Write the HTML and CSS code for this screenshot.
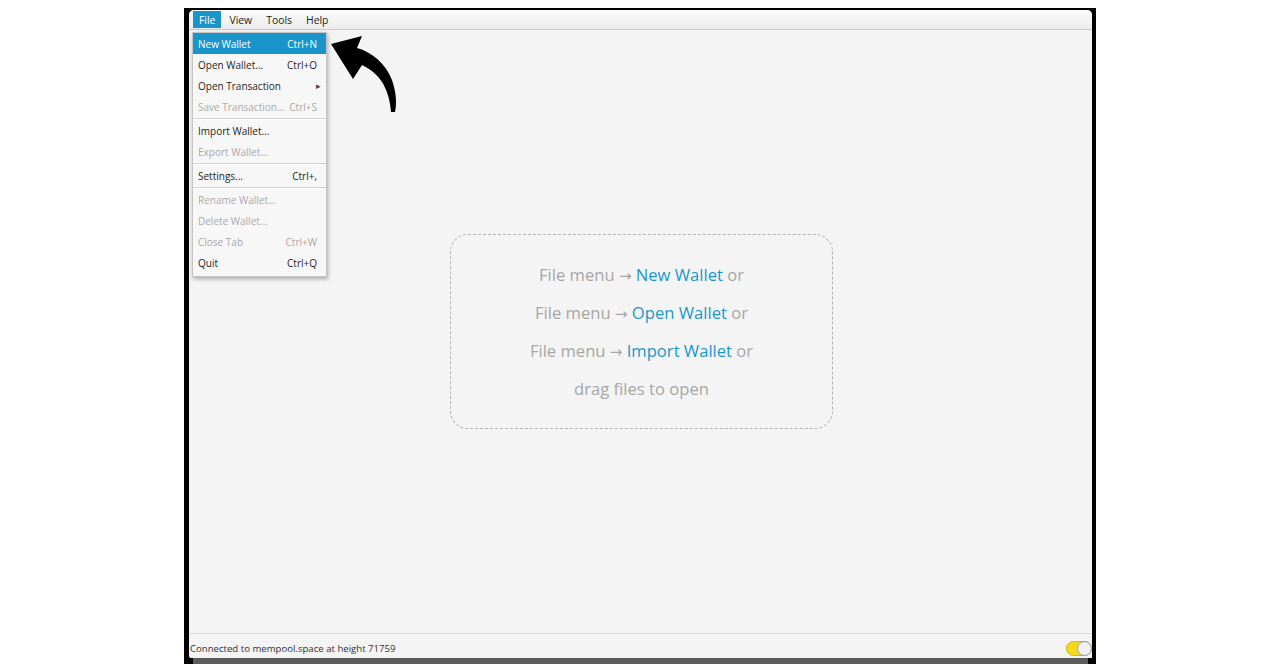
FILE: index.html
```html
<!DOCTYPE html>
<html>
<head>
<meta charset="utf-8">
<link rel="stylesheet" href="styles.css">
</head>
<body>
<div class="frame">
  <div class="window">
    <div class="menubar">
      <span class="mb-item active">File</span>
      <span class="mb-item">View</span>
      <span class="mb-item">Tools</span>
      <span class="mb-item">Help</span>
    </div>
    <div class="main">
      <div class="dropbox">
        <div class="line">File menu <span class="arr">→</span> <span class="link">New Wallet</span> or</div>
        <div class="line">File menu <span class="arr">→</span> <span class="link">Open Wallet</span> or</div>
        <div class="line">File menu <span class="arr">→</span> <span class="link">Import Wallet</span> or</div>
        <div class="line">drag files to open</div>
      </div>
    </div>
    <div class="statusbar">
      <span class="status-text">Connected to mempool.space at height 71759</span>
      <span class="toggle"><span class="knob"></span></span>
    </div>

    <div class="menu">
      <div class="row sel"><span>New Wallet</span><span>Ctrl+N</span></div>
      <div class="row"><span>Open Wallet...</span><span>Ctrl+O</span></div>
      <div class="row"><span>Open Transaction</span><span class="sub">&#9656;</span></div>
      <div class="row dis"><span>Save Transaction...</span><span>Ctrl+S</span></div>
      <div class="sep"></div>
      <div class="row"><span>Import Wallet...</span><span></span></div>
      <div class="row dis"><span>Export Wallet...</span><span></span></div>
      <div class="sep"></div>
      <div class="row"><span>Settings...</span><span>Ctrl+,</span></div>
      <div class="sep"></div>
      <div class="row dis"><span>Rename Wallet...</span><span></span></div>
      <div class="row dis"><span>Delete Wallet...</span><span></span></div>
      <div class="row dis"><span>Close Tab</span><span>Ctrl+W</span></div>
      <div class="row"><span>Quit</span><span>Ctrl+Q</span></div>
    </div>

    <svg class="arrow" width="90" height="90" viewBox="0 0 90 90">
      <path d="M11,14 L42,6 L37,18 C52,22 66,34 72,50 C76,62 77,72 75,82 L71,82 C70,70 67,60 62,52 C57,44 50,39 42,35 L33,49 Z" fill="#000"/>
    </svg>
  </div>
  <div class="shadow"></div>
</div>
</body>
</html>
```

FILE: styles.css
```css
html, body {
  margin: 0;
  padding: 0;
  background: #ffffff;
}
body {
  width: 1280px;
  height: 668px;
  overflow: hidden;
  font-family: "Open Sans", "Noto Sans", sans-serif;
}
.frame {
  margin: 8px 0 0 184px;
  width: 912px;
  height: 656px;
  box-sizing: border-box;
  background: #000;
  padding: 2px 4px 0 5px;
  display: flex;
  flex-direction: column;
}
.window {
  position: relative;
  flex: 1;
  background: #f4f4f4;
  border-radius: 5px 5px 0 2px;
  display: flex;
  flex-direction: column;
  overflow: visible;
}
.shadow {
  height: 6px;
  margin: 0 4px 0 4px;
  background: #5c5c5c;
}
.menubar {
  height: 20px;
  box-sizing: border-box;
  border-bottom: 1px solid #c9c9c9;
  background: linear-gradient(#fbfbfb, #ececec);
  border-radius: 5px 5px 0 0;
  display: flex;
  align-items: stretch;
  padding: 1px 0 1px 4px;
  font-size: 10.4px;
  color: #1e1e1e;
}
.mb-item {
  display: flex;
  align-items: center;
  padding: 0 7px;
}
.mb-item.active {
  background: #1995cb;
  color: #fff;
  padding: 0 6px;
  margin-right: 1px;
}
.main {
  flex: 1;
  display: flex;
  align-items: center;
  justify-content: center;
  padding-left: 2px;
}
.dropbox {
  width: 383px;
  height: 195px;
  box-sizing: border-box;
  border: 1px dashed #b3b3b3;
  border-radius: 18px;
  display: flex;
  flex-direction: column;
  justify-content: center;
  align-items: center;
  font-size: 16.6px;
  color: #a6a6a6;
}
.line {
  height: 38px;
  line-height: 38px;
  text-align: center;
}
.arr {
  font-family: "DejaVu Sans", sans-serif;
  font-size: 15px;
}
.link {
  color: #1a97c9;
}
.statusbar {
  height: 25px;
  box-sizing: border-box;
  border-top: 1px solid #dcdcdc;
  display: flex;
  align-items: flex-end;
  justify-content: space-between;
  font-size: 9.6px;
  color: #333;
  padding: 0 0 2px 1px;
}
.status-text {
  line-height: 15px;
}
.toggle {
  width: 26px;
  height: 15px;
  box-sizing: border-box;
  border-radius: 8px;
  background: #f5da1c;
  border: 1px solid #c9b52a;
  position: relative;
}
.knob {
  position: absolute;
  right: -1px;
  top: -1px;
  width: 15px;
  height: 15px;
  box-sizing: border-box;
  border-radius: 50%;
  background: #f1f1f1;
  border: 1px solid #9e9e9e;
}
.menu {
  position: absolute;
  left: 3px;
  top: 22px;
  width: 135px;
  box-sizing: border-box;
  background: #f7f7f7;
  border: 1px solid #c4c4c4;
  box-shadow: 1px 2px 4px rgba(0, 0, 0, 0.3);
  padding: 0 0 3px 0;
  font-size: 10px;
  color: #1e1e1e;
}
.row {
  height: 21px;
  display: flex;
  align-items: center;
  justify-content: space-between;
  padding: 0 9px 0 5px;
}
.row.sel {
  background: #1995cb;
  color: #fff;
}
.row.dis {
  color: #a9a9a9;
}
.sub {
  font-size: 9px;
  margin-right: -4px;
  color: #444;
}
.sep {
  height: 1px;
  margin: 1px 0 0 0;
  background: #d3d3d3;
  border-bottom: 1px solid #fff;
}
.arrow {
  position: absolute;
  left: 131px;
  top: 20px;
}
```
